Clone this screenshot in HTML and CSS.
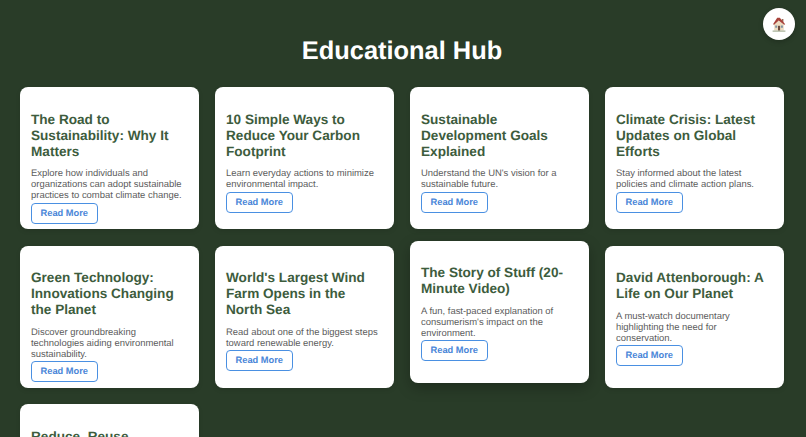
FILE: index.html
```html
<!DOCTYPE html>
<html lang="en">
<head>
  <meta charset="UTF-8">
  <meta name="viewport" content="width=device-width, initial-scale=1.0">
  <title>Educational Hub</title>
  <link rel="stylesheet" href="styles.css">
</head>
<body>
  <a class="home-btn" href="#" aria-label="Home">
    <svg viewBox="0 0 14 15" width="14" height="15">
      <path d="M9.8 2h1.6v3.5H9.8z" fill="#9a6a55"/>
      <path d="M2.2 7 6.5 3.5 11.8 7v6.6H2.2z" fill="#eddcc0"/>
      <path d="M1 7.2 5.2.8h2.6l5.4 6.4-1 .6-5.5-4.2-4.6 4.2z" fill="#a8423a"/>
      <path d="M3.2 8.6h2v2.2h-2zM8.9 8.6h2v2.2h-2z" fill="#7f93a3"/>
      <path d="M6 8.8h2.1v4.8H6z" fill="#6e4a3c"/>
      <path d="M.6 13.6h12.8v1H.6z" fill="#93a083"/>
    </svg>
  </a>

  <h1>Educational Hub</h1>

  <div class="grid">
    <div class="card">
      <h3>The Road to Sustainability: Why It Matters</h3>
      <p>Explore how individuals and organizations can adopt sustainable practices to combat climate change.</p>
      <a class="read-more" href="#">Read More</a>
    </div>
    <div class="card">
      <h3>10 Simple Ways to Reduce Your Carbon Footprint</h3>
      <p>Learn everyday actions to minimize environmental impact.</p>
      <a class="read-more" href="#">Read More</a>
    </div>
    <div class="card">
      <h3>Sustainable Development Goals Explained</h3>
      <p>Understand the UN's vision for a sustainable future.</p>
      <a class="read-more" href="#">Read More</a>
    </div>
    <div class="card">
      <h3>Climate Crisis: Latest Updates on Global Efforts</h3>
      <p>Stay informed about the latest policies and climate action plans.</p>
      <a class="read-more" href="#">Read More</a>
    </div>
    <div class="card">
      <h3>Green Technology: Innovations Changing the Planet</h3>
      <p>Discover groundbreaking technologies aiding environmental sustainability.</p>
      <a class="read-more" href="#">Read More</a>
    </div>
    <div class="card">
      <h3>World's Largest Wind Farm Opens in the North Sea</h3>
      <p>Read about one of the biggest steps toward renewable energy.</p>
      <a class="read-more" href="#">Read More</a>
    </div>
    <div class="card raised">
      <h3>The Story of Stuff (20-Minute Video)</h3>
      <p>A fun, fast-paced explanation of consumerism's impact on the environment.</p>
      <a class="read-more" href="#">Read More</a>
    </div>
    <div class="card">
      <h3>David Attenborough: A Life on Our Planet</h3>
      <p>A must-watch documentary highlighting the need for conservation.</p>
      <a class="read-more" href="#">Read More</a>
    </div>
    <div class="card">
      <h3>Reduce, Reuse, Recycle: A Simple Guide</h3>
      <p>Practical tips for cutting down waste at home.</p>
      <a class="read-more" href="#">Read More</a>
    </div>
  </div>
</body>
</html>
```

FILE: styles.css
```css
html {
  overflow: hidden;
}
body {
  margin: 0;
  padding: 0 22px 20px 20px;
  background-color: #293c28;
  color: #fff;
  font-family: "Liberation Sans", Arial, sans-serif;
  text-rendering: geometricPrecision;
}
h1 {
  margin: 0 0 20px;
  padding-top: 35px;
  font-size: 25.4px;
  line-height: 32px;
  text-align: center;
}
.home-btn {
  position: absolute;
  top: 8px;
  right: 11px;
  display: flex;
  align-items: center;
  justify-content: center;
  width: 32px;
  height: 32px;
  border-radius: 50%;
  background-color: #fff;
  box-shadow: 0 2px 5px rgba(0, 0, 0, 0.2);
}
.grid {
  display: grid;
  grid-template-columns: repeat(4, 1fr);
  gap: 16.6px 16px;
}
.card {
  display: flex;
  flex-direction: column;
  align-items: flex-start;
  padding: 24.5px 11px 5.65px;
  background-color: #fff;
  border-radius: 8px;
  box-shadow: 0 2px 5px rgba(0, 0, 0, 0.1);
}
.card.raised {
  transform: translateY(-5px);
  box-shadow: 0 5px 14px rgba(0, 0, 0, 0.25);
}
.card h3 {
  margin: 0 0 8.5px;
  color: #3d5c3d;
  font-size: 13.6px;
  line-height: 16px;
}
.card p {
  margin: 0 0 1.5px;
  color: #5c5c5c;
  font-size: 9.45px;
  line-height: 11px;
}
.read-more {
  display: block;
  box-sizing: border-box;
  height: 21px;
  padding: 0 8.5px;
  border: 1px solid #4a90e2;
  border-radius: 4px;
  color: #4a86d8;
  font-size: 9.3px;
  font-weight: bold;
  line-height: 19px;
  text-decoration: none;
}
```
